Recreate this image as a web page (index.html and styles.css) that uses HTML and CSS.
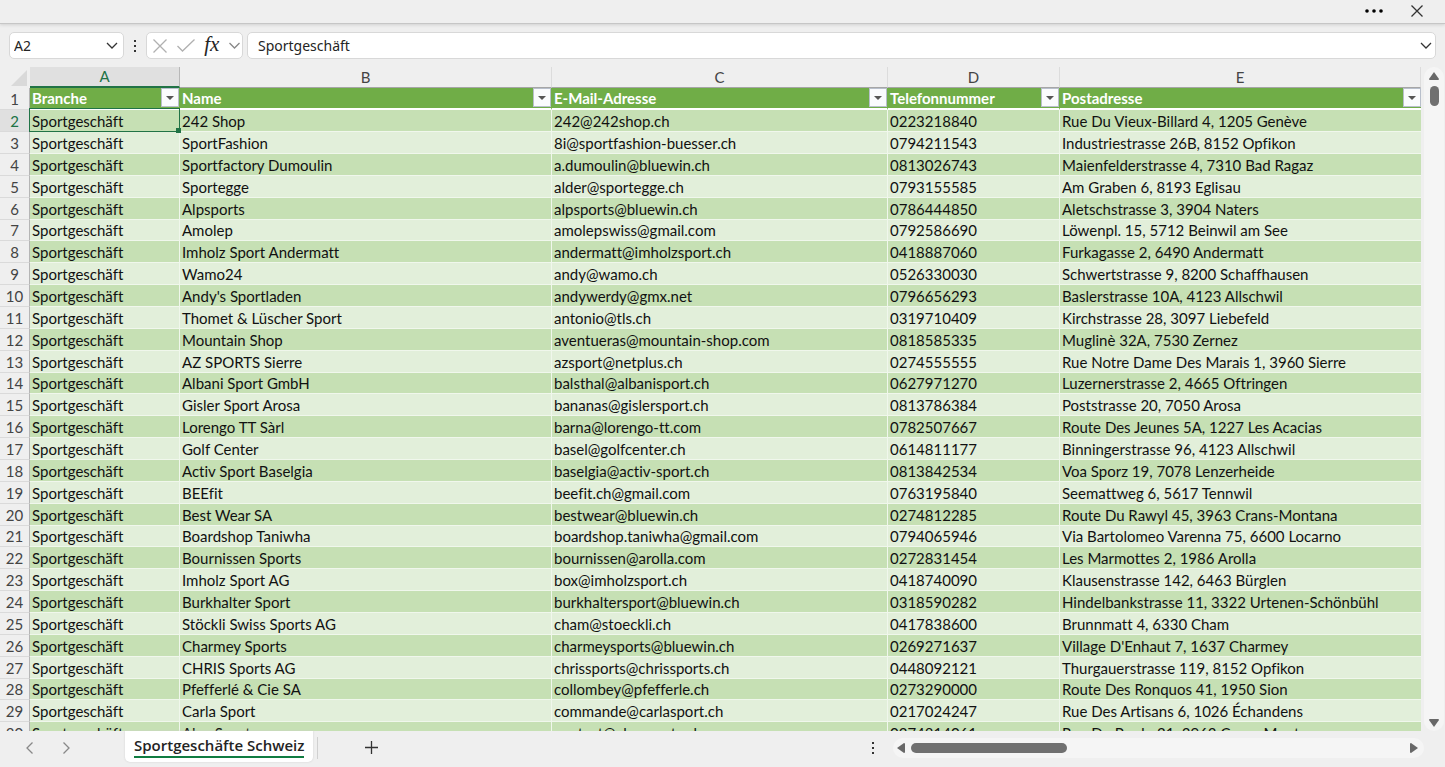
FILE: index.html
```html
<!DOCTYPE html>
<html lang="de">
    <head>
        <meta charset="UTF-8" />
        <meta name="viewport" content="width=device-width, initial-scale=1.0" />
        <title>Sportgeschäfte Schweiz</title>
        <link rel="stylesheet" href="styles.css">
    </head>
    <body>
        <header class="titlebar">
            <button type="button" aria-label="Mehr">
                <svg width="18" height="4" viewBox="0 0 18 4"><circle cx="2" cy="2" r="1.800" /><circle cx="9" cy="2" r="1.800" /><circle cx="16" cy="2" r="1.800" /></svg>
            </button>
            <button type="button" aria-label="Schliessen">
                <svg class="line" width="12" height="12" viewBox="0 0 12 12"><path d="M.5.5l11 11M11.5.5l-11 11" /></svg>
            </button>
        </header>

        <div class="formula-bar">
            <div class="box name-box">
                <input type="text" value="A2" aria-label="Namenfeld" />
                <button type="button" aria-label="Namen anzeigen">
                    <svg class="line" width="12" height="7" viewBox="0 0 12 7"><path d="M1 1l5 5 5-5" /></svg>
                </button>
            </div>
            <svg class="grip" width="4" height="14" viewBox="0 0 4 14"><path d="M1 1h2v2H1zM1 6h2v2H1zM1 11h2v2H1z" /></svg>
            <div class="box tools">
                <button type="button" aria-label="Abbrechen">
                    <svg class="line off" width="14" height="14" viewBox="0 0 14 14"><path d="M.5.5l13 13M13.5.5l-13 13" /></svg>
                </button>
                <button type="button" aria-label="Eingeben">
                    <svg class="line off" width="18" height="13" viewBox="0 0 18 13"><path d="M.5 7l5 5L17.500.5" /></svg>
                </button>
                <button type="button" class="fx" aria-label="Funktion einfügen">fx</button>
                <button type="button" aria-label="Funktionen">
                    <svg class="line mid" width="11" height="7" viewBox="0 0 11 7"><path d="M.5 1l5 5 5-5" /></svg>
                </button>
            </div>
            <div class="box formula">
                <input type="text" value="Sportgeschäft" aria-label="Bearbeitungsleiste" />
                <button type="button" aria-label="Erweitern">
                    <svg class="line" width="12" height="7" viewBox="0 0 12 7"><path d="M1 1l5 5 5-5" /></svg>
                </button>
            </div>
        </div>

        <main class="workspace">
            <div class="sheet">
                <table>
                    <colgroup>
                        <col class="c-num"><col class="c-a"><col class="c-b"><col class="c-c"><col class="c-d"><col>
                    </colgroup>
                    <thead>
                        <tr>
                            <th class="corner"><svg width="16" height="16" viewBox="0 0 16 16"><path d="M16 0v16H0z" /></svg></th>
                            <th class="active">A</th>
                            <th>B</th>
                            <th>C</th>
                            <th>D</th>
                            <th>E</th>
                        </tr>
                    </thead>
                    <tbody>
                        <tr class="fields">
                            <th>1</th>
                            <td><div>Branche<button type="button" aria-label="Branche filtern"></button></div></td>
                            <td><div>Name<button type="button" aria-label="Name filtern"></button></div></td>
                            <td><div>E-Mail-Adresse<button type="button" aria-label="E-Mail-Adresse filtern"></button></div></td>
                            <td><div>Telefonnummer<button type="button" aria-label="Telefonnummer filtern"></button></div></td>
                            <td><div>Postadresse<button type="button" aria-label="Postadresse filtern"></button></div></td>
                        </tr>
                        <tr><th class="active">2</th><td class="selected">Sportgeschäft</td><td>242 Shop</td><td>242@242shop.ch</td><td>0223218840</td><td>Rue Du Vieux-Billard 4, 1205 Genève</td></tr>
                        <tr><th>3</th><td>Sportgeschäft</td><td>SportFashion</td><td>8i@sportfashion-buesser.ch</td><td>0794211543</td><td>Industriestrasse 26B, 8152 Opfikon</td></tr>
                        <tr><th>4</th><td>Sportgeschäft</td><td>Sportfactory Dumoulin</td><td>a.dumoulin@bluewin.ch</td><td>0813026743</td><td>Maienfelderstrasse 4, 7310 Bad Ragaz</td></tr>
                        <tr><th>5</th><td>Sportgeschäft</td><td>Sportegge</td><td>alder@sportegge.ch</td><td>0793155585</td><td>Am Graben 6, 8193 Eglisau</td></tr>
                        <tr><th>6</th><td>Sportgeschäft</td><td>Alpsports</td><td>alpsports@bluewin.ch</td><td>0786444850</td><td>Aletschstrasse 3, 3904 Naters</td></tr>
                        <tr><th>7</th><td>Sportgeschäft</td><td>Amolep</td><td>amolepswiss@gmail.com</td><td>0792586690</td><td>Löwenpl. 15, 5712 Beinwil am See</td></tr>
                        <tr><th>8</th><td>Sportgeschäft</td><td>Imholz Sport Andermatt</td><td>andermatt@imholzsport.ch</td><td>0418887060</td><td>Furkagasse 2, 6490 Andermatt</td></tr>
                        <tr><th>9</th><td>Sportgeschäft</td><td>Wamo24</td><td>andy@wamo.ch</td><td>0526330030</td><td>Schwertstrasse 9, 8200 Schaffhausen</td></tr>
                        <tr><th>10</th><td>Sportgeschäft</td><td>Andy's Sportladen</td><td>andywerdy@gmx.net</td><td>0796656293</td><td>Baslerstrasse 10A, 4123 Allschwil</td></tr>
                        <tr><th>11</th><td>Sportgeschäft</td><td>Thomet &amp; Lüscher Sport</td><td>antonio@tls.ch</td><td>0319710409</td><td>Kirchstrasse 28, 3097 Liebefeld</td></tr>
                        <tr><th>12</th><td>Sportgeschäft</td><td>Mountain Shop</td><td>aventueras@mountain-shop.com</td><td>0818585335</td><td>Muglinè 32A, 7530 Zernez</td></tr>
                        <tr><th>13</th><td>Sportgeschäft</td><td>AZ SPORTS Sierre</td><td>azsport@netplus.ch</td><td>0274555555</td><td>Rue Notre Dame Des Marais 1, 3960 Sierre</td></tr>
                        <tr><th>14</th><td>Sportgeschäft</td><td>Albani Sport GmbH</td><td>balsthal@albanisport.ch</td><td>0627971270</td><td>Luzernerstrasse 2, 4665 Oftringen</td></tr>
                        <tr><th>15</th><td>Sportgeschäft</td><td>Gisler Sport Arosa</td><td>bananas@gislersport.ch</td><td>0813786384</td><td>Poststrasse 20, 7050 Arosa</td></tr>
                        <tr><th>16</th><td>Sportgeschäft</td><td>Lorengo TT Sàrl</td><td>barna@lorengo-tt.com</td><td>0782507667</td><td>Route Des Jeunes 5A, 1227 Les Acacias</td></tr>
                        <tr><th>17</th><td>Sportgeschäft</td><td>Golf Center</td><td>basel@golfcenter.ch</td><td>0614811177</td><td>Binningerstrasse 96, 4123 Allschwil</td></tr>
                        <tr><th>18</th><td>Sportgeschäft</td><td>Activ Sport Baselgia</td><td>baselgia@activ-sport.ch</td><td>0813842534</td><td>Voa Sporz 19, 7078 Lenzerheide</td></tr>
                        <tr><th>19</th><td>Sportgeschäft</td><td>BEEfit</td><td>beefit.ch@gmail.com</td><td>0763195840</td><td>Seemattweg 6, 5617 Tennwil</td></tr>
                        <tr><th>20</th><td>Sportgeschäft</td><td>Best Wear SA</td><td>bestwear@bluewin.ch</td><td>0274812285</td><td>Route Du Rawyl 45, 3963 Crans-Montana</td></tr>
                        <tr><th>21</th><td>Sportgeschäft</td><td>Boardshop Taniwha</td><td>boardshop.taniwha@gmail.com</td><td>0794065946</td><td>Via Bartolomeo Varenna 75, 6600 Locarno</td></tr>
                        <tr><th>22</th><td>Sportgeschäft</td><td>Bournissen Sports</td><td>bournissen@arolla.com</td><td>0272831454</td><td>Les Marmottes 2, 1986 Arolla</td></tr>
                        <tr><th>23</th><td>Sportgeschäft</td><td>Imholz Sport AG</td><td>box@imholzsport.ch</td><td>0418740090</td><td>Klausenstrasse 142, 6463 Bürglen</td></tr>
                        <tr><th>24</th><td>Sportgeschäft</td><td>Burkhalter Sport</td><td>burkhaltersport@bluewin.ch</td><td>0318590282</td><td>Hindelbankstrasse 11, 3322 Urtenen-Schönbühl</td></tr>
                        <tr><th>25</th><td>Sportgeschäft</td><td>Stöckli Swiss Sports AG</td><td>cham@stoeckli.ch</td><td>0417838600</td><td>Brunnmatt 4, 6330 Cham</td></tr>
                        <tr><th>26</th><td>Sportgeschäft</td><td>Charmey Sports</td><td>charmeysports@bluewin.ch</td><td>0269271637</td><td>Village D'Enhaut 7, 1637 Charmey</td></tr>
                        <tr><th>27</th><td>Sportgeschäft</td><td>CHRIS Sports AG</td><td>chrissports@chrissports.ch</td><td>0448092121</td><td>Thurgauerstrasse 119, 8152 Opfikon</td></tr>
                        <tr><th>28</th><td>Sportgeschäft</td><td>Pfefferlé &amp; Cie SA</td><td>collombey@pfefferle.ch</td><td>0273290000</td><td>Route Des Ronquos 41, 1950 Sion</td></tr>
                        <tr><th>29</th><td>Sportgeschäft</td><td>Carla Sport</td><td>commande@carlasport.ch</td><td>0217024247</td><td>Rue Des Artisans 6, 1026 Échandens</td></tr>
                        <tr><th>30</th><td>Sportgeschäft</td><td>Alex Sports</td><td>contact@alexsports.ch</td><td>0274814061</td><td>Rue Du Prado 21, 3963 Crans-Montana</td></tr>
                    </tbody>
                </table>
            </div>
            <div class="vscroll">
                <svg width="10" height="8" viewBox="0 0 10 8"><path d="M5 0l5 7q0 1-1 1H1q-1 0-1-1z" /></svg>
                <div class="thumb"></div>
                <svg class="end" width="10" height="8" viewBox="0 0 10 8"><path d="M5 8l5-7q0-1-1-1H1q-1 0-1 1z" /></svg>
            </div>
        </main>

        <footer class="tabs">
            <button type="button" aria-label="Vorheriges Blatt">
                <svg class="line mid" width="7" height="12" viewBox="0 0 7 12"><path d="M6.500.5L1 6l5.500 5.500" /></svg>
            </button>
            <button type="button" aria-label="Nächstes Blatt">
                <svg class="line mid" width="7" height="12" viewBox="0 0 7 12"><path d="M.5.5L6 6 .5 11.500" /></svg>
            </button>
            <button type="button" class="tab"><span>Sportgeschäfte Schweiz</span></button>
            <button type="button" class="add" aria-label="Neues Blatt">
                <svg class="line" width="13" height="13" viewBox="0 0 13 13"><path d="M6.500 0v13M0 6.500h13" /></svg>
            </button>
            <svg class="grip" width="4" height="14" viewBox="0 0 4 14"><path d="M1 1h2v2H1zM1 6h2v2H1zM1 11h2v2H1z" /></svg>
            <div class="hscroll">
                <svg width="8" height="10" viewBox="0 0 8 10"><path d="M0 5l7-5q1 0 1 1v8q0 1-1 1z" /></svg>
                <div class="thumb"></div>
                <svg class="end" width="8" height="10" viewBox="0 0 8 10"><path d="M8 5L1 0Q0 0 0 1v8q0 1 1 1z" /></svg>
            </div>
        </footer>
    </body>
</html>
```
FILE: styles.css
```css
* {
    padding: 0;
    margin: 0;
    box-sizing: border-box;
}
body {
    display: flex;
    flex-direction: column;
    height: 100vh;
    overflow: hidden;
    background-color: #efefef;
    color: #242424;
    font-family: "Noto Sans", sans-serif;
    font-size: 14px;
}
button,
input {
    border: none;
    background: none;
    outline: none;
    font: inherit;
    color: inherit;
}
button {
    display: flex;
    align-items: center;
    justify-content: center;
}
svg {
    display: block;
    flex: none;
}
.line {
    fill: none;
    stroke: #333;
    stroke-width: 1.3;
}
.line.mid {
    stroke: #888;
}
.line.off {
    stroke: #b0b0b0;
}
.grip {
    fill: #333;
}

/* title bar */
.titlebar {
    display: flex;
    flex: none;
    justify-content: flex-end;
    align-items: center;
    gap: 28px;
    height: 24px;
    padding: 0 22px 1px 0;
    border-bottom: 1px solid #c6c6c6;
    box-shadow: 0 1px 3px #d0d0d0;
}

/* formula bar */
.formula-bar {
    display: flex;
    flex: none;
    align-items: center;
    height: 43px;
    padding: 0 9px;
}
.box {
    display: flex;
    align-items: center;
    height: 27px;
    background-color: #fff;
    border: 1px solid #d8d8d8;
    border-radius: 5px;
}
.box input {
    flex: 1;
    min-width: 0;
}
.name-box {
    width: 115px;
    padding: 0 5px 0 4px;
}
.formula-bar .grip {
    margin: 0 9px;
}
.tools {
    justify-content: space-between;
    width: 97px;
    margin-right: 4px;
    padding: 0 2px 0 6px;
}
.fx {
    padding-bottom: 3px;
    font-family: "Liberation Serif", serif;
    font-size: 21px;
    font-style: italic;
    line-height: 20px;
}
.formula {
    flex: 1;
    padding: 0 3px 0 10px;
}

/* sheet */
.workspace {
    display: flex;
    flex: 1;
    min-height: 0;
}
.sheet {
    flex: 1;
    min-width: 0;
    overflow: hidden;
}
table {
    width: 100%;
    table-layout: fixed;
    border-collapse: separate;
    border-spacing: 0;
    font-family: Lato, sans-serif;
    font-size: 15px;
    font-variant-ligatures: none;
    line-height: 20px;
    color: #111;
}
.c-num {
    width: 30px;
}
.c-a {
    width: 150px;
}
.c-b {
    width: 372px;
}
.c-c {
    width: 336px;
}
.c-d {
    width: 172px;
}
th {
    font-weight: normal;
    color: #444;
}
thead th {
    height: 21px;
    border-right: 1px solid #dcdcdc;
    border-bottom: 1px solid #a6a6a6;
    line-height: 19px;
}
thead .active {
    background-color: #e0e0e0;
    border-right-color: #b8b8b8;
    border-bottom: 2px solid #217346;
    color: #217346;
}
thead .corner {
    border-color: #efefef;
}
.corner svg {
    margin: 1px 0 0 11px;
    fill: #d9d9d9;
}
tbody tr {
    height: 22px;
}
tbody tr:nth-child(7n) {
    height: 21px;
}
tbody th {
    border-right: 1px solid #b5b5b5;
    border-bottom: 1px solid #dadada;
}
tbody th.active {
    background-color: #e0e0e0;
    color: #217346;
}
td {
    padding-left: 2px;
    border-right: 1px solid #f0f7ec;
    border-bottom: 1px solid #f0f7ec;
    background-color: #e2efda;
    white-space: nowrap;
}
td:last-child {
    border-right: none;
}
tr:nth-child(even) td {
    background-color: #c6e0b4;
}
.fields td {
    background-color: #70ad47;
    border-right-color: #70ad47;
    border-bottom: 2px solid #fff;
    font-weight: bold;
    color: #fff;
}
.fields div {
    display: flex;
    justify-content: space-between;
}
.fields button {
    width: 18px;
    height: 19px;
    background-color: #fafbfd;
    border: 1px solid #b8bfcb;
}
.fields button::after {
    content: "";
    border: 4px solid transparent;
    border-top-color: #555;
    border-bottom: none;
}
.selected {
    position: relative;
}
.selected::before {
    content: "";
    position: absolute;
    inset: -2px -1px -1px -1px;
    border: 1px solid #217346;
}
.selected::after {
    content: "";
    position: absolute;
    right: -2px;
    bottom: -2px;
    width: 5px;
    height: 5px;
    background-color: #217346;
}

/* scroll bars */
.thumb {
    background-color: #707070;
    border-radius: 5px;
}
.vscroll,
.hscroll {
    display: flex;
    align-items: center;
    background-color: #f5f5f5;
    border-radius: 10px;
    fill: #686868;
}
.vscroll {
    flex-direction: column;
    width: 20px;
    margin: 0 1px 0 3px;
    padding: 5px 0 4px;
}
.vscroll .thumb {
    width: 9px;
    height: 20px;
    margin-top: 6px;
}
.vscroll .end {
    margin-top: auto;
}

/* sheet tabs */
.tabs {
    display: flex;
    flex: none;
    align-items: center;
    height: 36px;
    padding: 0 21px 3px 26px;
}
.tabs > button {
    margin-right: 30px;
}
.tabs > .tab {
    align-self: flex-start;
    height: 31px;
    margin: 0 4px 0 25px;
    padding: 0 9px;
    background-color: #fff;
    border-radius: 0 0 5px 5px;
    box-shadow: 0 0 2px #ccc;
    font-family: "Open Sans", sans-serif;
    font-size: 15px;
    font-weight: 600;
}
.tab span {
    padding-bottom: 1px;
    border-bottom: 2px solid #107c41;
}
.tabs > .add {
    height: 22px;
    margin-right: auto;
    padding-left: 47px;
    border-left: 1px solid #d0d0d0;
}
.hscroll {
    width: 38%;
    height: 20px;
    margin-left: 18px;
    padding: 0 6px 0 4px;
}
.hscroll .thumb {
    width: 30%;
    height: 10px;
    margin-left: 6px;
}
.hscroll .end {
    margin-left: auto;
}
```
